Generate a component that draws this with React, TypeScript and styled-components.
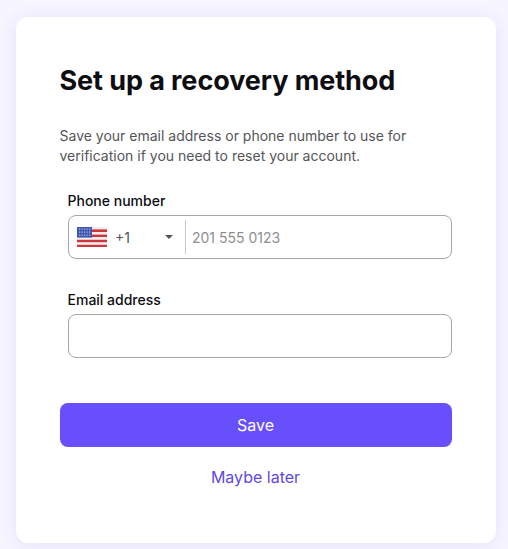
import styled, { createGlobalStyle } from "styled-components";

const GlobalStyle = createGlobalStyle`
  html, body {
    margin: 0;
    padding: 0;
  }
  body {
    font-family: Inter, "Liberation Sans", sans-serif;
  }
`;

const UsFlag = () => (
  <FlagSvg viewBox="0 0 30 20" aria-hidden="true">
    <rect width="30" height="20" fill="#efeeee" />
    <rect y="2.4" width="30" height="2.6" fill="#d0343c" />
    <rect y="7.6" width="30" height="2.4" fill="#d0343c" />
    <rect y="12.8" width="30" height="2.4" fill="#d0343c" />
    <rect y="17.8" width="30" height="2.2" fill="#d0343c" />
    <rect width="15" height="10.6" fill="#3f57ae" />
    <g fill="#b9c2e6">
      {[1.5, 4.5, 7.5].map((y) =>
        [2, 4.5, 7, 9.5, 12].map((x) => <rect key={`${x}-${y}`} x={x} y={y} width="1.2" height="1.2" />)
      )}
    </g>
  </FlagSvg>
);

export default function App() {
  return (
    <Page>
      <GlobalStyle />
      <Card>
        <Title>Set up a recovery method</Title>
        <Intro>
          Save your email address or phone number to use for verification if you need to reset your account.
        </Intro>
        <Fields>
          <Field>
            <Label>Phone number</Label>
            <InputBox>
              <CountryPicker>
                <UsFlag />
                <DialCode>+1</DialCode>
                <Caret />
              </CountryPicker>
              <PhoneInput placeholder="201 555 0123" />
            </InputBox>
          </Field>
          <Field>
            <Label>Email address</Label>
            <InputBox>
              <EmailInput />
            </InputBox>
          </Field>
        </Fields>
        <SaveButton>Save</SaveButton>
        <LaterLink>Maybe later</LaterLink>
      </Card>
    </Page>
  );
}

const Page = styled.div`
  box-sizing: border-box;
  width: 508px;
  height: 549px;
  padding: 17px 12px 6px 16px;
  overflow: hidden;
  background: #f7f5ff;
`;

const Card = styled.main`
  box-sizing: border-box;
  display: flex;
  flex-direction: column;
  height: 526px;
  padding: 48px 44px 0;
  border-radius: 12px;
  background: #fff;
  box-shadow: 0 2px 18px rgba(104, 79, 252, 0.12);
`;

const Title = styled.h1`
  margin: 0 0 0 -0.5px;
  color: #0d0d12;
  font-size: 27px;
  font-weight: 700;
  line-height: 32px;
  letter-spacing: -0.08px;
`;

const Intro = styled.p`
  margin: 29px 0 0 -0.5px;
  color: #555558;
  font-size: 14px;
  line-height: 20px;
`;

const Fields = styled.div`
  display: flex;
  flex-direction: column;
  gap: 31px;
  margin-top: 25px;
`;

const Field = styled.div`
  display: flex;
  flex-direction: column;
  gap: 4px;
`;

const Label = styled.label`
  padding-left: 7.5px;
  color: #0d0d12;
  font-size: 14px;
  font-weight: 500;
  line-height: 20px;
`;

const InputBox = styled.div`
  box-sizing: border-box;
  display: flex;
  align-items: center;
  width: 384px;
  height: 44px;
  margin-left: 8px;
  border: 1px solid #a6a6a8;
  border-radius: 8px;
  background: #fff;
`;

const CountryPicker = styled.div`
  box-sizing: border-box;
  display: flex;
  align-items: center;
  width: 117px;
  height: 34px;
  padding: 0 12px 0 8px;
  border-right: 1px solid #c8c8ca;
`;

const FlagSvg = styled.svg`
  display: block;
  width: 30px;
  height: 20px;
`;

const DialCode = styled.span`
  margin-left: 8px;
  color: #55555a;
  font-size: 14px;
`;

const Caret = styled.span`
  width: 0;
  height: 0;
  margin-left: auto;
  border-left: 4px solid transparent;
  border-right: 4px solid transparent;
  border-top: 4px solid #555558;
`;

const PhoneInput = styled.input`
  flex: 1;
  min-width: 0;
  padding: 0 6px;
  border: 0;
  outline: 0;
  color: #0d0d12;
  font: 400 14px Inter, "Liberation Sans", sans-serif;

  &::placeholder {
    color: #8e8e92;
    opacity: 1;
  }
`;

const EmailInput = styled.input`
  flex: 1;
  min-width: 0;
  height: 100%;
  padding: 0 12px;
  border: 0;
  border-radius: 8px;
  outline: 0;
  background: transparent;
  font: 400 14px Inter, "Liberation Sans", sans-serif;
`;

const SaveButton = styled.button`
  height: 44px;
  margin-top: 45px;
  padding: 0 1px 0 0;
  border: 0;
  border-radius: 8px;
  background: #684ffc;
  color: #fff;
  font: 400 16px Inter, "Liberation Sans", sans-serif;
`;

const LaterLink = styled.a`
  margin-top: 20px;
  padding-right: 1px;
  color: #5f48e0;
  font-size: 16px;
  line-height: 20px;
  text-align: center;
`;
